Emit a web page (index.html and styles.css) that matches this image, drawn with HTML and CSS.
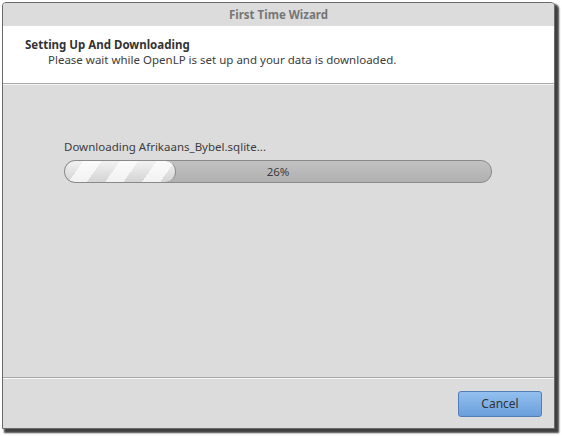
FILE: index.html
```html
<!DOCTYPE html>
<html>
<head>
<meta charset="utf-8">
<link rel="stylesheet" href="styles.css">
</head>
<body>
<div class="window">
  <div class="titlebar">First Time Wizard</div>
  <div class="header">
    <div class="h-title">Setting Up And Downloading</div>
    <div class="h-sub">Please wait while OpenLP is set up and your data is downloaded.</div>
  </div>
  <div class="content">
    <div class="label">Downloading Afrikaans_Bybel.sqlite...</div>
    <div class="progress">
      <div class="fill" style="width: 26%"></div>
      <div class="pct">26%</div>
    </div>
  </div>
  <div class="footer">
    <button class="btn">Cancel</button>
  </div>
</div>
</body>
</html>
```
FILE: styles.css
```css
html, body {
  margin: 0;
  padding: 0;
  background: #ffffff;
  width: 562px;
  height: 437px;
  overflow: hidden;
}
body {
  font-family: "Noto Sans", "Open Sans", sans-serif;
  font-size: 11.5px;
  color: #3c3c3c;
  padding: 2px 0 0 2px;
  box-sizing: border-box;
}
.window {
  width: 553px;
  height: 427px;
  box-sizing: border-box;
  border: 1px solid #6a6a6a;
  border-radius: 4px 4px 0 0;
  background: #dcdcdc;
  display: flex;
  flex-direction: column;
  box-shadow: 3px 3px 2px 1px rgba(0,0,0,0.75);
  overflow: hidden;
}
.titlebar {
  height: 23px;
  line-height: 23px;
  text-align: center;
  font-weight: bold;
  color: #767676;
  background: #dcdcdc;
  flex: none;
}
.header {
  background: #ffffff;
  height: 58px;
  box-sizing: border-box;
  padding: 11px 0 0 22px;
  border-bottom: 1px solid #a8a8a8;
  flex: none;
}
.h-title {
  font-weight: bold;
  color: #333;
  line-height: 15px;
}
.h-sub {
  padding-left: 23px;
  line-height: 16px;
  color: #3c3c3c;
}
.content {
  flex: 1;
  border-top: 1px solid #f6f6f6;
  border-bottom: 1px solid #a8a8a8;
  padding: 54px 0 0 61px;
}
.label {
  line-height: 16px;
  margin-bottom: 5px;
}
.progress {
  position: relative;
  width: 428px;
  height: 23px;
  box-sizing: border-box;
  border: 1px solid #8a8a8a;
  border-radius: 11px;
  background: linear-gradient(#c2c2c2, #b0b0b0);
  overflow: hidden;
}
.fill {
  height: 100%;
  box-sizing: border-box;
  border-right: 1px solid #8a8a8a;
  border-radius: 10px;
  background:
    repeating-linear-gradient(125deg, rgba(255,255,255,0) 0 15px, rgba(255,255,255,0.7) 15px 30px),
    linear-gradient(#f2f2f2, #d4d4d4);
}
.pct {
  position: absolute;
  inset: 0;
  text-align: center;
  line-height: 21px;
  color: #3c3c3c;
}
.footer {
  height: 50px;
  flex: none;
  border-top: 1px solid #f6f6f6;
  display: flex;
  justify-content: flex-end;
  align-items: flex-start;
  padding: 12px 12px 0 0;
  box-sizing: border-box;
}
.btn {
  width: 84px;
  height: 26px;
  border: 1px solid #4f7fb5;
  border-radius: 3px;
  background: linear-gradient(#93c0ef, #6a9edb);
  font-family: inherit;
  font-size: 12px;
  color: #333;
  padding: 0 0 2px;
}
```
